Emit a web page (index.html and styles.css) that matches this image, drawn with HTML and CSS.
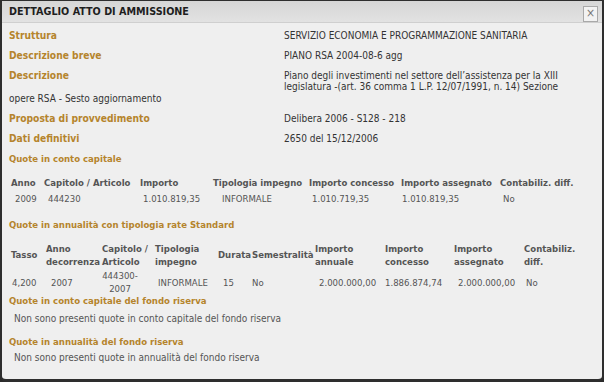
FILE: index.html
```html
<!DOCTYPE html>
<html lang="it">
<head>
<meta charset="utf-8">
<title>Dettaglio atto di ammissione</title>
<link rel="stylesheet" href="styles.css">
</head>
<body>
<div class="dialog">
  <div class="titlebar">
    <span class="title">DETTAGLIO ATTO DI AMMISSIONE</span>
    <span class="close">&#215;</span>
  </div>
  <div class="content">
    <div class="row"><span class="label">Struttura</span><span class="value">SERVIZIO ECONOMIA E PROGRAMMAZIONE SANITARIA</span></div>
    <div class="row"><span class="label">Descrizione breve</span><span class="value">PIANO RSA 2004-08-6 agg</span></div>
    <div class="row row-wrap"><span class="label">Descrizione</span><span class="value value-wrap">Piano degli investimenti nel settore dell’assistenza per la XIII legislatura -(art. 36 comma 1 L.P. 12/07/1991, n. 14) Sezione</span></div>
    <div class="cont">opere RSA - Sesto aggiornamento</div>
    <div class="row"><span class="label">Proposta di provvedimento</span><span class="value">Delibera 2006 - S128 - 218</span></div>
    <div class="row"><span class="label">Dati definitivi</span><span class="value">2650 del 15/12/2006</span></div>

    <div class="section">Quote in conto capitale</div>
    <table class="grid grid1">
      <colgroup><col class="w33"><col class="w96"><col class="w73"><col class="w96"><col class="w92"><col class="w99"><col class="w80"></colgroup>
      <thead><tr><th>Anno</th><th>Capitolo / Articolo</th><th>Importo</th><th>Tipologia impegno</th><th>Importo concesso</th><th>Importo assegnato</th><th>Contabiliz. diff.</th></tr></thead>
      <tbody><tr><td>2009</td><td>444230</td><td>1.010.819,35</td><td>INFORMALE</td><td>1.010.719,35</td><td>1.010.819,35</td><td>No</td></tr></tbody>
    </table>

    <div class="section s2">Quote in annualità con tipologia rate Standard</div>
    <table class="grid grid2">
      <colgroup><col class="w35"><col class="w56"><col class="w53"><col class="w63"><col class="w34"><col class="w63"><col class="w70"><col class="w69"><col class="w70"><col class="w60"></colgroup>
      <thead><tr><th>Tasso</th><th>Anno decorrenza</th><th>Capitolo / Articolo</th><th>Tipologia impegno</th><th>Durata</th><th>Semestralità</th><th>Importo annuale</th><th>Importo concesso</th><th>Importo assegnato</th><th>Contabiliz. diff.</th></tr></thead>
      <tbody><tr><td>4,200</td><td>2007</td><td><span class="cap">444300-2007</span></td><td>INFORMALE</td><td>15</td><td>No</td><td>2.000.000,00</td><td>1.886.874,74</td><td>2.000.000,00</td><td>No</td></tr></tbody>
    </table>

    <div class="section s3">Quote in conto capitale del fondo riserva</div>
    <div class="note">Non sono presenti quote in conto capitale del fondo riserva</div>

    <div class="section s4">Quote in annualità del fondo riserva</div>
    <div class="note note2">Non sono presenti quote in annualità del fondo riserva</div>
  </div>
</div>
</body>
</html>
```
FILE: styles.css
```css
html, body {
  margin: 0;
  padding: 0;
  background: #2b2b2b;
}
body {
  font-family: "DejaVu Sans Condensed", "DejaVu Sans", "Liberation Sans", sans-serif;
  font-stretch: condensed;
  font-size: 10px;
  color: #333;
}
.dialog {
  width: 600px;
  height: 378px;
  border: 2px solid #2e2e2e;
  border-top-width: 1px;
  border-bottom-width: 3px;
  border-radius: 0 0 6px 6px;
  background: #efefef;
  overflow: hidden;
}
.titlebar {
  height: 21px;
  display: flex;
  align-items: center;
  justify-content: space-between;
  padding: 0 4px 0 7px;
  background: linear-gradient(#d6d6d6, #e2e2e2);
  border-bottom: 1px solid #cfcfcf;
}
.title {
  font-weight: bold;
  font-size: 10.7px;
  color: #1e1e1e;
}
.close {
  width: 13px;
  height: 14px;
  border: 1px solid #a9a9a9;
  background: #f2f2f2;
  color: #777;
  font-size: 12px;
  line-height: 13px;
  text-align: center;
  margin-top: 4px;
}
.content {
  padding: 3px 0 0 7px;
}
.row {
  display: flex;
  line-height: 20px;
}
.label {
  width: 275px;
  flex: none;
  font-weight: bold;
  font-size: 10.2px;
  color: #b5842c;
}
.row-wrap {
  line-height: 10.5px;
  padding-top: 5px;
}
.value-wrap {
  width: 282px;
}
.cont {
  line-height: 11px;
  margin-top: 1px;
  padding-bottom: 5px;
}
.section {
  font-weight: bold;
  font-size: 9.5px;
  line-height: 12px;
  color: #b5842c;
  margin-top: 4px;
}
.grid {
  border-collapse: collapse;
  table-layout: fixed;
  margin-left: 2px;
  color: #555;
  font-size: 9.5px;
}
.grid th, .grid td {
  padding: 0;
  text-align: left;
  vertical-align: middle;
  overflow: visible;
}
.grid th { font-weight: bold; }
.grid1 { margin-top: 10px; width: 569px; }
.grid1 th, .grid1 td { height: 16px; line-height: 16px; white-space: nowrap; }
.grid1 td:nth-child(1) { padding-left: 4px; }
.grid1 td:nth-child(2) { padding-left: 4px; }
.grid1 td:nth-child(3) { padding-left: 3px; }
.grid1 td:nth-child(4) { padding-left: 9px; }
.grid1 td:nth-child(5) { padding-left: 3px; }
.grid1 td:nth-child(6) { padding-left: 1px; }
.grid1 td:nth-child(7) { padding-left: 3px; }
.grid2 { margin-top: 10px; width: 573px; }
.grid2 th { height: 27px; line-height: 13px; padding-bottom: 1px; }
.grid2 td { height: 26px; line-height: 13px; }
.grid2 td:nth-child(1) { padding-left: 1px; }
.grid2 td:nth-child(2) { padding-left: 5px; }
.grid2 td:nth-child(4) { padding-left: 3px; }
.grid2 td:nth-child(5) { padding-left: 5px; }
.grid2 td:nth-child(7) { padding-left: 4px; }
.grid2 td:nth-child(9) { padding-left: 4px; }
.grid2 td:nth-child(10) { padding-left: 2px; }
.cap {
  display: inline-block;
  width: 36px;
  text-align: center;
}
.w33 { width: 33px; } .w96 { width: 96px; } .w73 { width: 73px; } .w92 { width: 92px; }
.w99 { width: 99px; } .w80 { width: 80px; } .w35 { width: 35px; } .w56 { width: 56px; }
.w53 { width: 53px; } .w63 { width: 63px; } .w34 { width: 34px; } .w70 { width: 70px; }
.w69 { width: 69px; } .w60 { width: 60px; }
.s2 { margin-top: 12px; }
.s3 { margin-top: 0; }
.s4 { margin-top: 11px; }
.note {
  color: #555;
  line-height: 12px;
  margin-top: 6px;
  padding-left: 5px;
}
.note2 { margin-top: 4px; }
```
